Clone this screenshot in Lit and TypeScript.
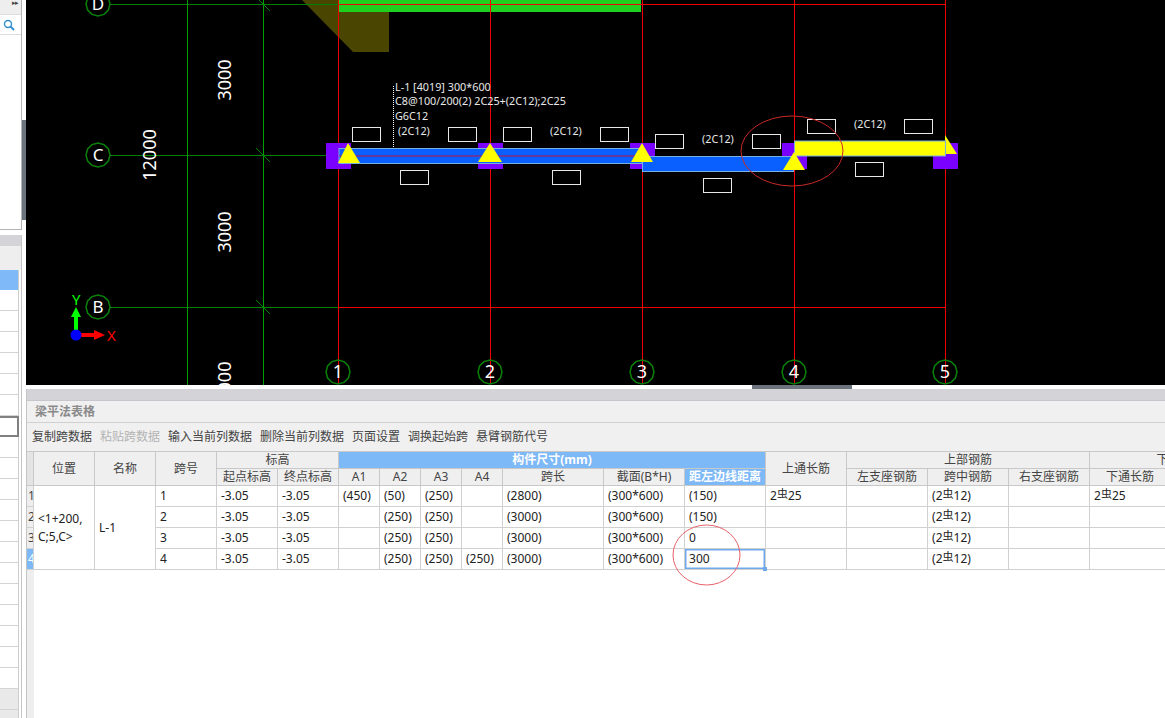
import { LitElement, css, html, svg } from 'lit'
import { customElement } from 'lit/decorators.js'

const AXIS_X = [338, 490, 642, 794, 945]
const AXIS_Y: [string, number][] = [['D', 4], ['C', 155], ['B', 307]]
const COL_WIDTHS = [7, 61, 61, 61, 61, 61, 41, 41, 41, 41, 101, 81, 81, 81, 81, 81, 81, 81, 101]
const BLANK_ROWS = Array.from({ length: 19 }, (_, i) => i)

const TOOLS = [
  { label: '复制跨数据' },
  { label: '粘贴跨数据', off: true },
  { label: '输入当前列数据' },
  { label: '删除当前列数据' },
  { label: '页面设置' },
  { label: '调换起始跨' },
  { label: '悬臂钢筋代号' },
]

const SPANS = [
  { a1: '(450)', a2: '(50)', a3: '(250)', a4: '', len: '(2800)', edge: '(150)', top: true },
  { a1: '', a2: '(250)', a3: '(250)', a4: '', len: '(3000)', edge: '(150)', top: false },
  { a1: '', a2: '(250)', a3: '(250)', a4: '', len: '(3000)', edge: '0', top: false },
  { a1: '', a2: '(250)', a3: '(250)', a4: '(250)', len: '(3000)', edge: '300', top: false },
]

// white rebar boxes over the beams
const BOXES = [
  [352, 127], [448, 127], [503, 127], [600, 127], [400, 170], [552, 170],
  [655, 134], [752, 134], [703, 178], [807, 119], [904, 119], [855, 162],
]
const PURPLE = [[326, 143], [478, 143], [630, 143], [782, 143], [933, 143]]
const TRIANGLES = ['348,143 338,163 360,163', '490,143 478,162 502,162', '642,143 631,162 653,162', '794,152 783,170 805,170']

function bubble(cx: number, cy: number, label: string, size: number) {
  const pts = Array.from({ length: 12 }, (_, i) => {
    const a = (i * Math.PI) / 6
    return `${(cx + 12 * Math.cos(a)).toFixed(1)},${(cy + 12 * Math.sin(a)).toFixed(1)}`
  }).join(' ')
  return svg`<polygon points=${pts} fill="none" stroke="#0a800a" stroke-width="1.5"></polygon>
    <text x=${cx} y=${cy + size * 0.36} class="bubble" font-size=${size}>${label}</text>`
}

@customElement('app-root')
export class AppRoot extends LitElement {
  static override styles = css`
    :host {
      display: block;
      width: 1165px;
      height: 718px;
      overflow: hidden;
      background: #fff;
      font: 12px/1 'Noto Sans', 'Noto Sans CJK SC', sans-serif;
      color: #333;
    }
    .app {
      display: flex;
      height: 718px;
    }

    /* left dock */
    .dock {
      width: 22px;
      flex: none;
      display: flex;
      flex-direction: column;
    }
    .pane {
      height: 230px;
      flex: none;
      border-right: 1px solid #b4b4b4;
      border-bottom: 1px solid #b4b4b4;
      box-sizing: border-box;
      width: 22px;
    }
    .pane-top {
      height: 15px;
      background: #eee;
      border-bottom: 1px solid #ddd;
      box-sizing: border-box;
      color: #444;
      font-size: 7px;
      line-height: 6px;
      letter-spacing: -1px;
      text-align: right;
      padding-right: 3px;
    }
    .pane-search {
      height: 20px;
      border-bottom: 1px solid #ddd;
      box-sizing: border-box;
      padding: 4px 0 0 3px;
    }
    .pane-search svg {
      display: block;
    }
    .list {
      margin-top: 5px;
      flex: 1;
      width: 22px;
      box-sizing: border-box;
      border-right: 1px solid #c4c4c4;
      overflow: hidden;
    }
    .list-title {
      height: 11px;
      background: #d3d3d8;
    }
    .list-head {
      height: 24px;
      background: #eee;
    }
    .list-inner {
      width: 19px;
      box-sizing: border-box;
      border-right: 1px solid #ccc;
    }
    .list-sel {
      height: 20px;
      background: #80b9f7;
    }
    .list-row {
      height: 21px;
      box-sizing: border-box;
      border-bottom: 1px solid #d4d4d4;
    }
    .list-row.focus {
      border: 2px solid #808080;
      border-left: 0;
      width: 19px;
    }
    .list-row.grey {
      background: #e9e9e9;
    }

    .split-v {
      width: 4px;
      flex: none;
      padding-top: 120px;
      box-sizing: border-box;
    }
    .split-v div {
      height: 100px;
      background: #6b747c;
    }

    /* main column */
    .main {
      width: 1139px;
      flex: none;
      display: flex;
      flex-direction: column;
      min-width: 0;
    }
    .canvas {
      display: block;
      width: 1139px;
      height: 385px;
      background: #000;
      flex: none;
    }
    .canvas text {
      font-family: 'Noto Sans', sans-serif;
    }
    .canvas .bubble {
      fill: #fff;
      text-anchor: middle;
    }
    .canvas .dim {
      fill: #fff;
      font-size: 18px;
      text-anchor: middle;
    }
    .canvas .note {
      fill: #e8e8e8;
      font-size: 10.8px;
    }
    .split-h {
      height: 4px;
      flex: none;
      padding-left: 726px;
    }
    .split-h div {
      width: 100px;
      height: 4px;
      background: #6b747c;
    }
    .panel {
      flex: 1;
      display: flex;
      flex-direction: column;
      border-left: 1px solid #c4c4c4;
      min-height: 0;
    }
    .panel-bar {
      height: 12px;
      flex: none;
      background: #d3d3d8;
      border-bottom: 1px solid #c6c6cc;
      box-sizing: border-box;
    }
    .panel-title {
      height: 22px;
      flex: none;
      box-sizing: border-box;
      background: #f0f0f0;
      border-bottom: 1px solid #d0d0d0;
      padding: 4px 0 0 8px;
      color: #8a8a8a;
      font-weight: 700;
      line-height: 14px;
    }
    .tools {
      height: 28px;
      flex: none;
      box-sizing: border-box;
      background: #f0f0f0;
      display: flex;
      gap: 8px;
      padding: 7px 0 0 5px;
      line-height: 14px;
      color: #444;
    }
    .tools .off {
      color: #b4b4b4;
    }

    /* grid */
    .sheet {
      flex: 1;
      overflow: hidden;
      background: linear-gradient(90deg, #eee 7px, #fff 7px);
    }
    table {
      border-collapse: separate;
      border-spacing: 0;
      table-layout: fixed;
      width: 1205px;
      border-top: 1px solid #c8c8c8;
    }
    th,
    td {
      box-sizing: border-box;
      padding: 0;
      border-right: 1px solid #d0d0d0;
      border-bottom: 1px solid #d0d0d0;
      overflow: hidden;
      white-space: nowrap;
    }
    th {
      height: 17px;
      background: #efefef;
      font-weight: 400;
      color: #444;
      text-align: center;
      border-color: #c8c8c8;
    }
    th.blue {
      background: #7db8f7;
      color: #fff;
      font-weight: 700;
    }
    th.corner {
      background: #e4e4e4;
    }
    td {
      height: 21px;
      padding-left: 4px;
      color: #222;
    }
    td.num {
      padding: 0 0 0 1px;
      background: #eee;
      color: #444;
    }
    td.num.on {
      background: #7db8f7;
      color: #fff;
    }
    td.multi {
      white-space: normal;
      line-height: 18px;
    }
    td.cur {
      position: relative;
      box-shadow: inset 0 0 0 1.5px #6ea9ee;
      overflow: visible;
    }
    td.cur::after {
      content: '';
      position: absolute;
      right: -2px;
      bottom: -2px;
      width: 4px;
      height: 4px;
      background: #6ea9ee;
    }
    .bar {
      font-size: 11px;
      position: relative;
      top: -2px;
    }
    .mark {
      position: absolute;
      left: 672px;
      top: 524px;
      pointer-events: none;
    }
  `

  private rebar(pre: string, post: string) {
    return html`${pre}<span class="bar">虫</span>${post}`
  }

  private renderCanvas() {
    return html`<svg class="canvas" viewBox="26 0 1139 385">
      <polygon points="302,0 353,52 389,52 389,12 339,12 339,0" fill="#4a4500"></polygon>
      <rect x="339" y="0" width="302" height="12" fill="#1fd01f"></rect>

      <g stroke="#00a000" stroke-width="1" shape-rendering="crispEdges">
        <line x1="187.5" y1="0" x2="187.5" y2="385"></line>
        <line x1="263.5" y1="0" x2="263.5" y2="385"></line>
      </g>
      <g stroke="#008000" stroke-width="1">
        ${AXIS_Y.map(([, y]) => svg`<line x1="110" y1=${y + 0.5} x2="338" y2=${y + 0.5} shape-rendering="crispEdges"></line>
          <line x1="256" y1=${y - 7} x2="270" y2=${y + 7}></line>`)}
      </g>
      <g stroke="#f00000" stroke-width="1" shape-rendering="crispEdges">
        ${AXIS_X.map((x) => svg`<line x1=${x + 0.5} y1="0" x2=${x + 0.5} y2="384"></line>`)}
        <line x1="338" y1="4.5" x2="945" y2="4.5"></line>
        <line x1="338" y1="307.5" x2="945" y2="307.5"></line>
      </g>

      ${PURPLE.map(([x, y]) => svg`<rect x=${x} y=${y} width="25" height="26" fill="#7a00ff"></rect>`)}

      <rect x="339" y="148.5" width="303" height="15" fill="#0a60ff" stroke="#78b0e0"></rect>
      <line x1="339" y1="156" x2="642" y2="156" stroke="#c01040"></line>
      <rect x="642.5" y="156.5" width="151" height="15" fill="#0a60ff" stroke="#78b0e0"></rect>
      <polygon points="945,135 957,154 945,154" fill="#ffff00"></polygon>
      <rect x="794.5" y="141" width="151" height="15" fill="#ffff00" stroke="#78b0e0"></rect>
      ${TRIANGLES.map((p) => svg`<polygon points=${p} fill="#ffff00"></polygon>`)}

      ${BOXES.map(([x, y]) => svg`<rect x=${x + 0.5} y=${y + 0.5} width="28" height="14" fill="none" stroke="#e8e8e8"></rect>`)}

      <line x1="393.5" y1="86" x2="393.5" y2="148" stroke="#fff" stroke-dasharray="1 1"></line>
      <text class="note" x="395" y="91">L-1 [4019] 300*600</text>
      <text class="note" x="395" y="105">C8@100/200(2) 2C25+(2C12);2C25</text>
      <text class="note" x="395" y="120">G6C12</text>
      <text class="note" x="398" y="135">(2C12)</text>
      <text class="note" x="550" y="135">(2C12)</text>
      <text class="note" x="702" y="143">(2C12)</text>
      <text class="note" x="854" y="128">(2C12)</text>

      <text class="dim" transform="translate(231 80) rotate(-90)">3000</text>
      <text class="dim" transform="translate(156 155) rotate(-90)">12000</text>
      <text class="dim" transform="translate(231 232) rotate(-90)">3000</text>
      <text class="dim" transform="translate(231 377) rotate(-90)">000</text>

      ${AXIS_Y.map(([l, y]) => bubble(98, y, l, 17))}
      ${AXIS_X.map((x, i) => bubble(x, 372, String(i + 1), 18))}

      <ellipse cx="792" cy="151" rx="51" ry="35" fill="none" stroke="#c82828"></ellipse>

      <rect x="74" y="315" width="4" height="20" fill="#00ff00"></rect>
      <polygon points="76,307 71,317 81,317" fill="#00ff00"></polygon>
      <rect x="78" y="333" width="18" height="4" fill="#ff0000"></rect>
      <polygon points="105,335 94,330 94,340" fill="#ff0000"></polygon>
      <circle cx="76" cy="335" r="5.5" fill="#0000ff"></circle>
      <text x="72" y="305" font-size="15" fill="#00ff00">Y</text>
      <text x="107" y="341" font-size="15" fill="#ff0000">X</text>
    </svg>`
  }

  private renderTable() {
    return html`<table>
      <colgroup>${COL_WIDTHS.map((w) => html`<col style="width:${w}px" />`)}</colgroup>
      <thead>
        <tr>
          <th class="corner" rowspan="2"></th>
          <th rowspan="2">位置</th>
          <th rowspan="2">名称</th>
          <th rowspan="2">跨号</th>
          <th colspan="2">标高</th>
          <th class="blue" colspan="7">构件尺寸(mm)</th>
          <th rowspan="2">上通长筋</th>
          <th colspan="3">上部钢筋</th>
          <th colspan="2">下部钢筋</th>
        </tr>
        <tr>
          <th>起点标高</th>
          <th>终点标高</th>
          <th>A1</th>
          <th>A2</th>
          <th>A3</th>
          <th>A4</th>
          <th>跨长</th>
          <th>截面(B*H)</th>
          <th class="blue">距左边线距离</th>
          <th>左支座钢筋</th>
          <th>跨中钢筋</th>
          <th>右支座钢筋</th>
          <th>下通长筋</th>
          <th></th>
        </tr>
      </thead>
      <tbody>
        ${SPANS.map(
          (s, i) => html`<tr>
            <td class="num ${i === 3 ? 'on' : ''}">${i + 1}</td>
            ${i === 0
              ? html`<td class="multi" rowspan="4">&lt;1+200,<br />C;5,C&gt;</td>
                  <td rowspan="4">L-1</td>`
              : ''}
            <td>${i + 1}</td>
            <td>-3.05</td>
            <td>-3.05</td>
            <td>${s.a1}</td>
            <td>${s.a2}</td>
            <td>${s.a3}</td>
            <td>${s.a4}</td>
            <td>${s.len}</td>
            <td>(300*600)</td>
            <td class=${i === 3 ? 'cur' : ''}>${s.edge}</td>
            <td>${s.top ? this.rebar('2', '25') : ''}</td>
            <td></td>
            <td>${this.rebar('(2', '12)')}</td>
            <td></td>
            <td>${s.top ? this.rebar('2', '25') : ''}</td>
            <td></td>
          </tr>`,
        )}
      </tbody>
    </table>`
  }

  override render() {
    return html`<div class="app">
        <aside class="dock">
          <div class="pane">
            <div class="pane-top">▸▸</div>
            <div class="pane-search">
              <svg width="12" height="12" viewBox="0 0 12 12" fill="none" stroke="#2f8fd0">
                <circle cx="5" cy="5" r="3.5" stroke-width="1.4"></circle>
                <line x1="7.5" y1="7.5" x2="11" y2="11" stroke-width="2"></line>
              </svg>
            </div>
          </div>
          <div class="list">
            <div class="list-title"></div>
            <div class="list-head"></div>
            <div class="list-inner">
              <div class="list-sel"></div>
              ${BLANK_ROWS.map((i) => html`<div class="list-row ${i === 6 ? 'focus' : ''}"></div>`)}
              <div class="list-row grey"></div>
              <div class="list-row grey"></div>
            </div>
          </div>
        </aside>
        <div class="split-v"><div></div></div>
        <div class="main">
          ${this.renderCanvas()}
          <div class="split-h"><div></div></div>
          <section class="panel">
            <div class="panel-bar"></div>
            <div class="panel-title">梁平法表格</div>
            <div class="tools">
              ${TOOLS.map((t) => html`<span class=${t.off ? 'off' : ''}>${t.label}</span>`)}
            </div>
            <div class="sheet">${this.renderTable()}</div>
          </section>
        </div>
      </div>
      <svg class="mark" width="70" height="64" viewBox="672 524 70 64">
        <ellipse cx="706.5" cy="555" rx="33.5" ry="30" fill="none" stroke="#e8606a"></ellipse>
      </svg>`
  }
}
